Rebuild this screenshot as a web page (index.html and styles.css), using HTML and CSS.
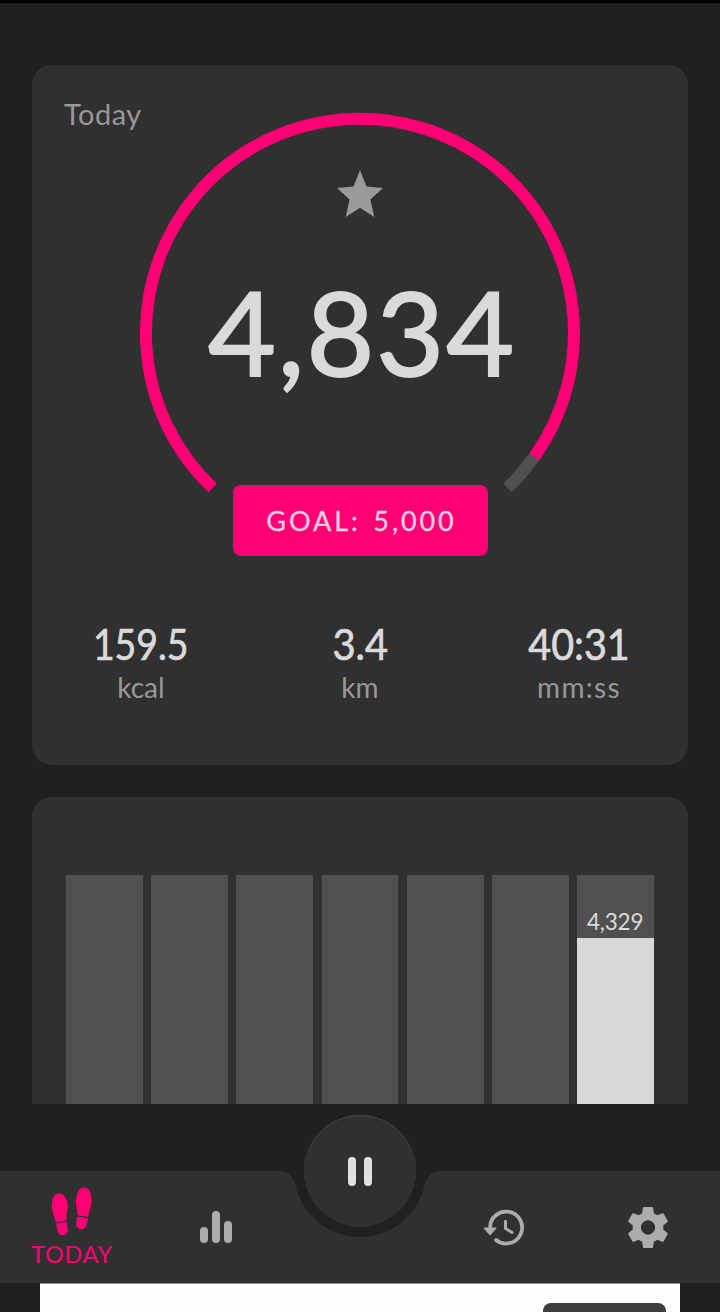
FILE: index.html
```html
<!DOCTYPE html>
<html lang="en">
<head>
<meta charset="utf-8">
<title>Steps</title>
<link rel="stylesheet" href="styles.css">
</head>
<body>
<div class="screen">
  <main class="feed">
    <section class="card today">
      <h1 class="card-title">Today</h1>
      <div class="gauge">
        <svg class="gauge-ring" viewBox="0 0 440 444" width="440" height="444" fill="none" stroke-width="12">
          <path stroke="#505050" d="M396.300 342A214 214 0 0 1 367.300 376"/>
          <path stroke="#ff0074" d="M72.700 376A214 214 0 1 1 394.200 345"/>
        </svg>
        <div class="gauge-content">
          <svg class="star" viewBox="2 2 20 19" width="46" height="47" preserveAspectRatio="none"><path fill="#9b9b9b" d="M12 17.27 18.18 21l-1.64-7.03L22 9.24l-7.19-.61L12 2 9.19 8.63 2 9.24l5.46 4.73L5.82 21z"/></svg>
          <div class="steps">4,834</div>
          <button class="goal">GOAL: 5,000</button>
        </div>
      </div>
      <div class="stats">
        <div class="stat"><span class="value v1">159.5</span><span class="unit">kcal</span></div>
        <div class="stat"><span class="value">3.4</span><span class="unit">km</span></div>
        <div class="stat"><span class="value v3">40:31</span><span class="unit wide">mm:ss</span></div>
      </div>
    </section>
    <section class="card chart">
      <div class="bar"></div><div class="bar"></div><div class="bar"></div><div class="bar"></div><div class="bar"></div><div class="bar"></div>
      <div class="bar"><span class="bar-label">4,329</span><div class="fill"></div></div>
    </section>
  </main>
  <nav class="nav">
    <svg class="nav-shape" viewBox="0 1171 720 112" width="720" height="112"><path fill="#303030" d="M0 1171H280C288 1171 293 1176 295.500 1185A66 66 0 0 0 424.500 1185C427 1176 432 1171 440 1171H720V1283H0Z"/></svg>
    <div class="tabs">
      <a class="tab active">
        <svg viewBox="50 1186 44 50" width="44" height="50" fill="#ff0074">
          <path d="M59.200 1193.300C64.500 1193.300 68 1200 67.800 1207C67.700 1210 66.700 1212 66.600 1214.500Q66.600 1217.500 66.600 1220.600L55.800 1222.400C55.300 1219 53.300 1215.500 52.200 1210.500C50.500 1202 53.500 1193.300 59.200 1193.300Z"/>
          <path d="M56 1223.600L66.700 1221.700C66.900 1224.500 67.800 1227 67.800 1229.800C67.800 1233 65.800 1235.200 62.900 1235.200C59.800 1235.200 57.800 1233 57.300 1230Z"/>
          <path d="M84.200 1187.500C89.700 1187.500 92.500 1195.500 91.400 1203.500C90.700 1209 88.600 1213 88 1217L77.400 1215.300C77.800 1211.500 76.300 1208.500 76 1203.500C75.500 1195 78.800 1187.500 84.200 1187.500Z"/>
          <path d="M77.200 1216.400L87.900 1218.200C87.800 1221 87 1224 86 1226.200C84.900 1228.500 83 1229.400 80.900 1229.200C78 1228.900 76 1226.700 76.100 1223.500C76.200 1221 77 1219 77.200 1216.400Z"/>
        </svg>
        <span class="tab-label">TODAY</span>
      </a>
      <a class="tab">
        <svg viewBox="0 0 32 32" width="32" height="32" fill="#acacac"><rect y="16" width="8" height="16" rx="4"/><rect x="12" width="8" height="32" rx="4"/><rect x="24" y="10" width="8" height="22" rx="4"/></svg>
      </a>
      <span></span>
      <a class="tab history">
        <svg viewBox="483 1208 42 38" width="42" height="38" fill="none" stroke="#acacac" stroke-linecap="round">
          <path stroke-width="3.800" stroke-linecap="butt" d="M490.100 1228A16 16 0 1 1 496 1240"/>
          <path stroke-width="3.800" d="M496 1240l.1 .1"/>
          <path stroke-width="3" d="M505.500 1221.200V1228.500L512 1232.500"/>
          <path fill="#acacac" stroke-width="1.500" stroke-linejoin="round" d="M484.500 1228.300H495.700L490.100 1234.500Z"/>
        </svg>
      </a>
      <a class="tab">
        <svg viewBox="2.200 2 19.600 20" width="40" height="41" preserveAspectRatio="none"><path fill="#acacac" d="M19.430 12.980c.04-.32.07-.64.07-.98s-.03-.66-.07-.98l2.110-1.650c.19-.15.24-.42.12-.64l-2-3.460c-.12-.22-.39-.3-.61-.22l-2.490 1c-.52-.4-1.080-.73-1.690-.98l-.38-2.650C14.460 2.180 14.250 2 14 2h-4c-.25 0-.46.18-.49.42l-.38 2.650c-.61.25-1.170.59-1.690.98l-2.490-1c-.23-.09-.49 0-.61.22l-2 3.460c-.13.22-.07.49.12.64l2.110 1.650c-.04.32-.07.65-.07.98s.03.66.07.98l-2.110 1.650c-.19.15-.24.42-.12.64l2 3.460c.12.22.39.3.61.22l2.490-1c.52.4 1.080.73 1.690.98l.38 2.650c.03.24.24.42.49.42h4c.25 0 .46-.18.49-.42l.38-2.650c.61-.25 1.170-.59 1.690-.98l2.490 1c.23.09.49 0 .61-.22l2-3.460c.12-.22.07-.49-.12-.64zM12 15.500a3.500 3.500 0 1 1 0-7 3.500 3.500 0 0 1 0 7z"/></svg>
      </a>
    </div>
    <button class="pause" aria-label="Pause"><span></span><span></span></button>
  </nav>
  <aside class="ad"><div class="ad-inner"><div class="ad-chip"></div></div></aside>
</div>
</body>
</html>
```
FILE: styles.css
```css
* { box-sizing: border-box; }
body { margin: 0; background: #202020; font-family: Lato, "Open Sans", sans-serif; }
button { border: 0; padding: 0; margin: 0; font: inherit; }
.screen { display: flex; flex-direction: column; width: 720px; height: 1312px; overflow: hidden; background: #202020; border-top: 3px solid #000; }
.feed { display: flex; flex-direction: column; gap: 32px; padding: 62px 32px 0; height: 1101px; overflow: hidden; flex: none; }
.card { background: #303030; border-radius: 20px; flex: none; }
.today { position: relative; height: 700px; padding-top: 47px; display: flex; flex-direction: column; align-items: center; }
.card-title { position: absolute; left: 32px; top: 31px; margin: 0; font-size: 29px; line-height: 36px; font-weight: 400; color: #989898; letter-spacing: .5px; }
.gauge { display: grid; width: 440px; height: 444px; }
.gauge-ring, .gauge-content { grid-area: 1 / 1; }
.gauge-content { display: flex; flex-direction: column; align-items: center; padding-top: 58px; }
.star { flex: none; }
.steps { height: 140px; margin-top: 44px; padding-left: 4px; line-height: 140px; font-size: 117px; letter-spacing: 2px; color: #dadada; -webkit-text-stroke: 2px #dadada; }
.goal { margin-top: auto; width: 255px; height: 71.500px; flex: none; border-radius: 8px; background: #ff0074; color: #ffd0e4; font-size: 27px; letter-spacing: 2.900px; word-spacing: 3px; padding-left: 3px; text-align: center; -webkit-text-stroke: .3px #ffd0e4; }
.stats { display: grid; grid-template-columns: repeat(3, 219px); justify-content: center; margin-top: 62px; }
.stat { display: flex; flex-direction: column; align-items: center; }
.value { font-size: 42px; line-height: 52px; color: #dadada; -webkit-text-stroke: .7px #dadada; transform: scaleX(.95); }
.v1 { transform: scaleX(.89); }
.v3 { transform: scaleX(.94); }
.unit { font-size: 28px; line-height: 34px; color: #989898; }
.wide { letter-spacing: 1.300px; }
.chart { height: 360px; padding: 78px 34px 0; display: grid; grid-template-columns: repeat(7, 1fr); gap: 8.500px; }
.bar { height: 282px; background: #505050; display: flex; flex-direction: column; align-items: center; padding-top: 31px; }
.bar-label { font-size: 22.500px; line-height: 32px; color: #dadada; letter-spacing: -.2px; padding-right: 1px; }
.fill { width: 100%; flex: 1; background: #d8d8d8; }
.nav { position: relative; flex: none; height: 179px; padding-top: 67px; background: #202020; display: grid; }
.nav-shape, .tabs { grid-area: 1 / 1; }
.tabs { display: grid; grid-template-columns: 144px 144px 144px 144px 144px; height: 112px; }
.tab { display: flex; flex-direction: column; align-items: center; justify-content: center; }
.tab.active { justify-content: flex-start; padding-top: 15px; }
.tab-label { font-size: 23.500px; line-height: 37px; color: #ff0074; letter-spacing: .7px; }
.pause { position: absolute; left: 304px; top: 11px; width: 112px; height: 112px; border-radius: 50%; background: #303030; box-shadow: inset 0 1px 1px #444; display: flex; align-items: center; justify-content: center; gap: 8px; }
.pause span { width: 8px; height: 29px; border-radius: 4px; background: #e0e0e0; }
.ad { height: 29px; flex: none; padding: 0 40px; }
.ad-inner { height: 29px; background: #fefefe; border-top: 1px solid #999; padding: 19px 14px 0 0; display: flex; justify-content: flex-end; overflow: hidden; }
.ad-chip { width: 123px; height: 20px; flex: none; border-radius: 8px; background: #3c3d3d; }
```
